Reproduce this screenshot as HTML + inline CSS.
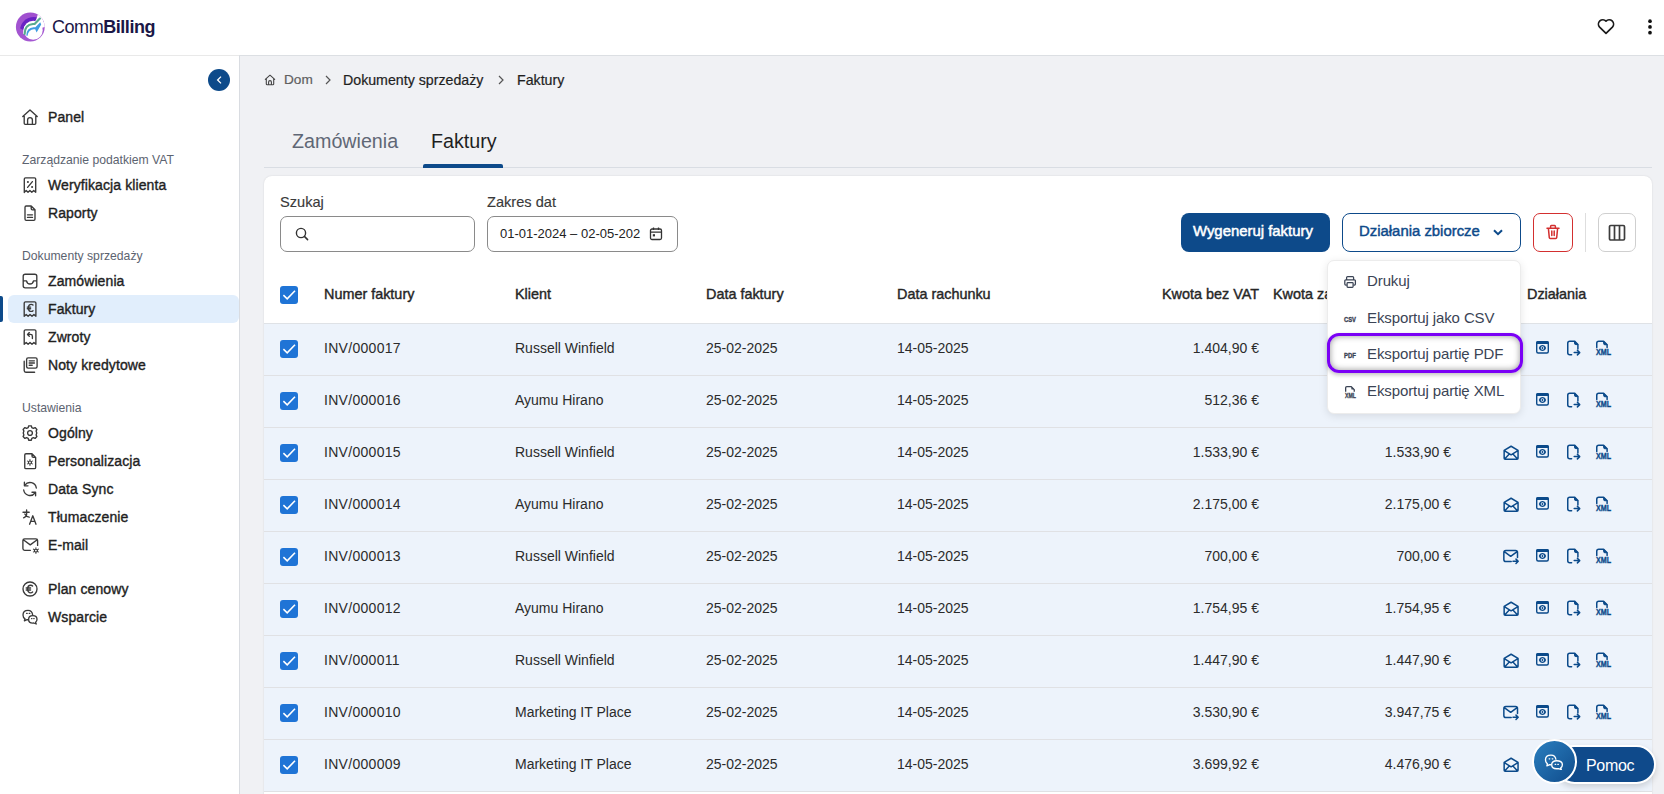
<!DOCTYPE html>
<html><head><meta charset="utf-8"><title>Faktury</title>
<style>
*{box-sizing:border-box;margin:0;padding:0}
html,body{width:1664px;height:794px;overflow:hidden}
body{background:#f0f1f4;font-family:"Liberation Sans",sans-serif;color:#1f1f1f;position:relative}
.abs{position:absolute}
#hdr{left:0;top:0;width:1664px;height:56px;background:#fff;border-bottom:1px solid #e9e9e9}
.logo{left:52px;top:16px;font-size:18px;line-height:22px;color:#1b1747;letter-spacing:-0.45px;white-space:nowrap}
.dot{left:1648.2px;width:3.6px;height:3.6px;border-radius:2px;background:#111}
#side{left:0;top:56px;width:240px;height:738px;background:#fff;border-right:1px solid #d9dce1}
.ntx{position:absolute;left:48px;line-height:28px;font-size:14px;font-weight:normal;-webkit-text-stroke:0.38px #1f1f1f;letter-spacing:0.1px;color:#1f1f1f;white-space:nowrap}
.sec{position:absolute;left:22px;font-size:12.2px;color:#5c6370;line-height:16px;white-space:nowrap}
.bc{font-size:14.2px;line-height:16px;position:absolute;top:72px;white-space:nowrap;-webkit-text-stroke:0.2px currentColor}
.tab{position:absolute;top:128px;font-size:19.7px;line-height:26px;white-space:nowrap}
#card{left:264px;top:176px;width:1388px;height:640px;background:#fff;border-radius:8px;box-shadow:0 0 2px rgba(0,0,0,0.12)}
.lbl{position:absolute;font-size:14.6px;color:#3a3a3a;line-height:16px;-webkit-text-stroke:0.15px #3a3a3a}
.inp{position:absolute;border:1px solid #8a8a8a;border-radius:7px;background:#fff}
.row{position:absolute;left:264px;width:1388px;height:52px;background:#edf3fb;border-bottom:1px solid #e0e1e4}
.cb{position:absolute;width:18px;height:18px;background:#1f74d6;border-radius:3px}
.cb svg{display:block}
.cell{position:absolute;font-size:14px;line-height:18px;color:#2b2b2b;white-space:nowrap}
.th{position:absolute;font-size:14.4px;line-height:18px;font-weight:normal;color:#262626;-webkit-text-stroke:0.4px #262626;white-space:nowrap}
.btnp{left:1181px;top:213px;width:149px;height:39px;background:#0d4a8a;border-radius:8px;color:#fff;font-size:14.9px;-webkit-text-stroke:0.5px #fff;line-height:37px;padding-left:12px;white-space:nowrap}
.btno{left:1342px;top:213px;width:179px;height:39px;border:1px solid #0d4a8a;border-radius:8px;color:#0d4a8a;font-size:14.9px;-webkit-text-stroke:0.45px #0d4a8a;line-height:35px;padding-left:16px;background:#fff;white-space:nowrap}
.menu{left:1327px;top:260px;width:194px;height:154px;background:#fff;border-radius:7px;border:1px solid #ececec;box-shadow:0 2px 8px rgba(0,0,0,0.1)}
.mtx{position:absolute;left:1367px;font-size:15px;line-height:18px;color:#3b4455;white-space:nowrap;letter-spacing:-0.1px}
.focus{left:1327px;top:333px;width:196px;height:40px;border:3px solid #7a00f5;border-radius:12px;box-shadow:0 2px 4px rgba(0,0,0,0.25), inset 0 0 6px rgba(0,0,0,0.42)}
.pill{left:1555px;top:745px;width:101px;height:39px;background:#0f4a8b;border:2px solid #fff;border-radius:20px;box-shadow:0 3px 6px rgba(0,0,0,0.15)}
.pill span{position:absolute;left:29px;top:1px;line-height:36px;font-size:16px;color:#fff;letter-spacing:-0.3px}
.pcirc{left:1532px;top:739px;width:45px;height:45px;border-radius:23px;border:2px solid #fff;background:linear-gradient(135deg,#2a7fbf,#104c8c)}

</style></head>
<body>
<div id="hdr" class="abs">
  <svg class="abs" style="left:14px;top:11px" width="34" height="34" viewBox="0 0 34 34">
    <defs><clipPath id="cpo"><circle cx="16.3" cy="16" r="14.4"/></clipPath><clipPath id="cpv"><circle cx="19.8" cy="19.8" r="13.9"/></clipPath>
    <linearGradient id="lgp" x1="0" y1="0" x2="0" y2="1"><stop offset="0" stop-color="#a04fcf"/><stop offset="1" stop-color="#a559d2"/></linearGradient></defs>
    <g clip-path="url(#cpo)">
      <rect x="0" y="0" width="34" height="34" fill="url(#lgp)"/>
      <path d="M0 0 H34 V12 L20 12.5 L11 20 L0 14 Z" fill="#6a22c4" clip-path="url(#cpv)"/>
      <circle cx="19.2" cy="19.3" r="9.5" fill="#fff"/>
      <path d="M18.8 19 L25.6 -2 L38 -2 L38 14.4 Z" fill="#fff"/>
    </g>
    <path d="M10.6 23 Q10.6 13.6 19 13 L20.6 13 L25.9 7.6" fill="none" stroke="#fff" stroke-width="3.4" stroke-linejoin="round"/>
    <path d="M10.6 23 Q10.6 13.6 19 13 L20.6 13 L25.9 7.6" fill="none" stroke="#5aab8e" stroke-width="2.2" stroke-linejoin="round" stroke-linecap="round"/>
    <path d="M12.3 24.5 Q12.5 16.6 19.6 16.3 L21.4 16.3 L26.2 11.2 L27.2 13.4 L22.6 21.6 L21.2 18.3 Q14.8 17.4 13.4 25 Z" fill="#3f9de2"/>
  </svg>
  <div class="abs logo">Comm<b>Billing</b></div>
  <svg class="abs" style="left:1596px;top:17px" width="20" height="19" viewBox="0 0 20 19"><path d="M10 16.4 L3.6 10.1 A3.9 3.9 0 0 1 10 4.2 A3.9 3.9 0 0 1 16.4 10.1 Z" fill="none" stroke="#1a1a1a" stroke-width="1.7" stroke-linejoin="round"/></svg>
  <svg class="abs" style="left:1640px;top:15px" width="20" height="24" viewBox="0 0 20 24"><circle cx="10" cy="6.2" r="1.85" fill="#111"/><circle cx="10" cy="11.9" r="1.85" fill="#111"/><circle cx="10" cy="17.7" r="1.85" fill="#111"/></svg>
</div>
<div id="side" class="abs"></div>
<div class="abs" style="left:239px;top:55px;width:1425px;height:1px;background:#dcdfe3"></div>
<div class="abs" style="left:208px;top:69px;width:22px;height:22px;border-radius:11px;background:#0d4a8a">
<svg width="22" height="22" viewBox="0 0 22 22"><path d="M13 7.6 L9.6 11 L13 14.4" fill="none" stroke="#fff" stroke-width="1.3"/></svg></div>
<div class="abs" style="left:8px;top:295px;width:231px;height:28px;background:#e1eefc;border-radius:6px"></div>
<div class="abs" style="left:0;top:296px;width:3px;height:26px;background:#0d4a8a;border-radius:0 2px 2px 0"></div>
<svg class="abs" style="left:22px;top:109px" width="18" height="18" viewBox="0 0 18 18"><path fill="none" stroke="#3a3a3a" stroke-width="1.35" stroke-linecap="round" stroke-linejoin="round" d="M0.8 7.6 L8 0.9 L15.2 7.6 M2.2 6.3 V14.2 Q2.2 15.3 3.3 15.3 H12.7 Q13.8 15.3 13.8 14.2 V6.3 M5.6 15.2 V11 A2.4 2.4 0 0 1 10.4 11 V15.2"/></svg>
<div class="ntx" style="top:103px">Panel</div>
<div class="sec" style="top:152px">Zarządzanie podatkiem VAT</div>
<svg class="abs" style="left:22px;top:177px" width="18" height="18" viewBox="0 0 18 18"><path fill="none" stroke="#3a3a3a" stroke-width="1.35" stroke-linecap="round" stroke-linejoin="round" d="M2.3 15.5 V2 Q2.3 0.8 3.5 0.8 H12.5 Q13.7 0.8 13.7 2 V15.2 L11.7 13.5 L9.8 15.2 L7.9 13.5 L6 15.2 L4.2 13.5 L2.3 15.2 Z"/><path fill="none" stroke="#3a3a3a" stroke-width="1.35" stroke-linecap="round" stroke-linejoin="round" d="M5.6 10.4 L10.4 4.6"/><circle cx="5.9" cy="5" r="1.05" fill="#3a3a3a"/><circle cx="10.1" cy="10" r="1.05" fill="#3a3a3a"/></svg>
<div class="ntx" style="top:171px">Weryfikacja klienta</div>
<svg class="abs" style="left:22px;top:205px" width="18" height="18" viewBox="0 0 18 18"><path fill="none" stroke="#3a3a3a" stroke-width="1.35" stroke-linecap="round" stroke-linejoin="round" d="M3 2.2 Q3 1 4.2 1 H9.2 L13 4.8 V14 Q13 15.3 11.8 15.3 H4.2 Q3 15.3 3 14 Z M9.2 1 V3.6 Q9.2 4.8 10.4 4.8 H13"/><path fill="none" stroke="#3a3a3a" stroke-width="1.35" stroke-linecap="round" stroke-linejoin="round" d="M5.5 9.8 H10.5 M5.5 12.4 H10.5"/></svg>
<div class="ntx" style="top:199px">Raporty</div>
<div class="sec" style="top:248px">Dokumenty sprzedaży</div>
<svg class="abs" style="left:22px;top:273px" width="18" height="18" viewBox="0 0 18 18"><path fill="none" stroke="#3a3a3a" stroke-width="1.35" stroke-linecap="round" stroke-linejoin="round" d="M1.2 3.2 Q1.2 1.2 3.2 1.2 H12.8 Q14.8 1.2 14.8 3.2 V12.8 Q14.8 14.8 12.8 14.8 H3.2 Q1.2 14.8 1.2 12.8 Z M1.2 7.8 H4.5 Q5.2 11 8 11 Q10.8 11 11.5 7.8 H14.8"/></svg>
<div class="ntx" style="top:267px">Zamówienia</div>
<svg class="abs" style="left:22px;top:301px" width="18" height="18" viewBox="0 0 18 18"><path fill="none" stroke="#3a3a3a" stroke-width="1.35" stroke-linecap="round" stroke-linejoin="round" d="M2.2 15.2 V2.1 Q2.2 0.8 3.5 0.8 H12.6 Q13.9 0.8 13.9 2.1 V15.2 L11.9 13.5 L10 15.2 L8 13.5 L6.1 15.2 L4.2 13.5 Z"/><path fill="none" stroke="#3a3a3a" stroke-width="1.35" stroke-linecap="round" stroke-linejoin="round" d="M11 4.1 Q10.3 3.4 9.3 3.4 Q6.4 3.4 6.4 6.9 Q6.4 10.4 9.3 10.4 Q10.3 10.4 11 9.7 M5.3 6.1 H8.6 M5.3 7.7 H8.6"/></svg>
<div class="ntx" style="top:295px">Faktury</div>
<svg class="abs" style="left:22px;top:329px" width="18" height="18" viewBox="0 0 18 18"><path fill="none" stroke="#3a3a3a" stroke-width="1.35" stroke-linecap="round" stroke-linejoin="round" d="M2.2 15.2 V2.1 Q2.2 0.8 3.5 0.8 H12.6 Q13.9 0.8 13.9 2.1 V15.2 L11.9 13.5 L10 15.2 L8 13.5 L6.1 15.2 L4.2 13.5 Z"/><path fill="none" stroke="#3a3a3a" stroke-width="1.35" stroke-linecap="round" stroke-linejoin="round" d="M7.3 3.6 L5.5 5.4 L7.3 7.2 M5.5 5.4 H8.6 Q10.4 5.4 10.4 7.2 V9.6"/></svg>
<div class="ntx" style="top:323px">Zwroty</div>
<svg class="abs" style="left:22px;top:357px" width="18" height="18" viewBox="0 0 18 18"><path fill="none" stroke="#3a3a3a" stroke-width="1.35" stroke-linecap="round" stroke-linejoin="round" d="M4.6 2.4 Q4.6 0.9 6.1 0.9 H13.6 Q15.1 0.9 15.1 2.4 V9.6 Q15.1 11.1 13.6 11.1 H6.1 Q4.6 11.1 4.6 9.6 Z"/><path fill="none" stroke="#3a3a3a" stroke-width="1.35" stroke-linecap="round" stroke-linejoin="round" d="M2.2 4.2 V13.6 Q2.2 15.2 3.8 15.2 H12.6"/><path fill="none" stroke="#3a3a3a" stroke-width="1.35" stroke-linecap="round" stroke-linejoin="round" d="M7.2 3.8 H12.4 M7.2 6 H12.4 M7.2 8.2 H10.2"/></svg>
<div class="ntx" style="top:351px">Noty kredytowe</div>
<div class="sec" style="top:400px">Ustawienia</div>
<svg class="abs" style="left:22px;top:425px" width="18" height="18" viewBox="0 0 18 18"><g transform="translate(8 8)"><path fill="none" stroke="#3a3a3a" stroke-width="1.35" stroke-linejoin="round" d="M-1.3 -7.2 L1.3 -7.2 L1.8 -5.4 L3.4 -4.6 L5.1 -5.4 L6.9 -3.6 L6.1 -1.9 L6.7 -0.3 L6.7 0.3 L6.1 1.9 L6.9 3.6 L5.1 5.4 L3.4 4.6 L1.8 5.4 L1.3 7.2 L-1.3 7.2 L-1.8 5.4 L-3.4 4.6 L-5.1 5.4 L-6.9 3.6 L-6.1 1.9 L-6.7 0.3 L-6.7 -0.3 L-6.1 -1.9 L-6.9 -3.6 L-5.1 -5.4 L-3.4 -4.6 L-1.8 -5.4 Z"/><circle r="2.4" fill="none" stroke="#3a3a3a" stroke-width="1.35"/></g></svg>
<div class="ntx" style="top:419px">Ogólny</div>
<svg class="abs" style="left:22px;top:453px" width="18" height="18" viewBox="0 0 18 18"><path fill="none" stroke="#3a3a3a" stroke-width="1.35" stroke-linecap="round" stroke-linejoin="round" d="M2.75 2 Q2.75 0.75 4 0.75 H10 L13.65 4.4 V14.4 Q13.65 15.6 12.4 15.6 H4 Q2.75 15.6 2.75 14.4 Z M10 0.75 V3 Q10 4.4 11.4 4.4 H13.65"/><path d="M8.69 6.28 L7.21 6.28 L7.70 7.31 L6.18 8.19 L5.54 7.25 L4.79 8.54 L5.93 8.62 L5.93 10.38 L4.79 10.46 L5.54 11.75 L6.18 10.81 L7.70 11.69 L7.21 12.72 L8.69 12.72 L8.20 11.69 L9.72 10.81 L10.36 11.75 L11.11 10.46 L9.97 10.38 L9.97 8.62 L11.11 8.54 L10.36 7.25 L9.72 8.19 L8.20 7.31Z" fill="#3a3a3a"/><circle cx="7.95" cy="9.5" r="0.9" fill="#fff"/></svg>
<div class="ntx" style="top:447px">Personalizacja</div>
<svg class="abs" style="left:22px;top:481px" width="18" height="18" viewBox="0 0 18 18"><path fill="none" stroke="#3a3a3a" stroke-width="1.35" stroke-linecap="round" stroke-linejoin="round" d="M14.3 7 A6.3 6.3 0 0 0 2.9 4.2 M1.7 9 A6.3 6.3 0 0 0 13.1 11.8"/><path fill="none" stroke="#3a3a3a" stroke-width="1.35" stroke-linecap="round" stroke-linejoin="round" d="M2.4 1.2 V4.8 H6 M13.6 14.8 V11.2 H10"/></svg>
<div class="ntx" style="top:475px">Data Sync</div>
<svg class="abs" style="left:22px;top:509px" width="18" height="18" viewBox="0 0 18 18"><path fill="none" stroke="#3a3a3a" stroke-width="1.35" stroke-linecap="round" stroke-linejoin="round" d="M1 3.2 H7.2 M4.6 1 V5.5 Q4.4 7.8 1.6 8.8 M2.8 5 Q4.2 7.8 7.2 8.2"/><path fill="none" stroke="#3a3a3a" stroke-width="1.35" stroke-linecap="round" stroke-linejoin="round" d="M7.6 15.2 L10.8 6.8 L14 15.2 M8.8 12.3 H12.8"/></svg>
<div class="ntx" style="top:503px">Tłumaczenie</div>
<svg class="abs" style="left:22px;top:537px" width="18" height="18" viewBox="0 0 18 18"><path fill="none" stroke="#3a3a3a" stroke-width="1.35" stroke-linecap="round" stroke-linejoin="round" d="M8.4 13.3 H2.6 Q0.9 13.3 0.9 11.6 V3.5 Q0.9 1.9 2.6 1.9 H13.9 Q15.6 1.9 15.6 3.5 V8.4 M1.3 2.7 L8.25 7.9 L15.2 2.7"/><path d="M14.64 10.38 L13.16 10.38 L13.65 11.41 L12.13 12.29 L11.49 11.35 L10.74 12.64 L11.88 12.72 L11.88 14.48 L10.74 14.56 L11.49 15.85 L12.13 14.91 L13.65 15.79 L13.16 16.82 L14.64 16.82 L14.15 15.79 L15.67 14.91 L16.31 15.85 L17.06 14.56 L15.92 14.48 L15.92 12.72 L17.06 12.64 L16.31 11.35 L15.67 12.29 L14.15 11.41Z" fill="#3a3a3a"/><circle cx="13.9" cy="13.6" r="0.9" fill="#fff"/></svg>
<div class="ntx" style="top:531px">E-mail</div>
<svg class="abs" style="left:22px;top:581px" width="18" height="18" viewBox="0 0 18 18"><circle cx="8" cy="8" r="7" fill="none" stroke="#3a3a3a" stroke-width="1.35" stroke-linecap="round" stroke-linejoin="round"/><path fill="none" stroke="#3a3a3a" stroke-width="1.35" stroke-linecap="round" stroke-linejoin="round" d="M10.6 5 Q9.8 4.2 8.8 4.2 Q5.6 4.2 5.6 8 Q5.6 11.8 8.8 11.8 Q9.8 11.8 10.6 11 M4.2 7 H8.6 M4.2 9 H8.6"/></svg>
<div class="ntx" style="top:575px">Plan cenowy</div>
<svg class="abs" style="left:22px;top:609px" width="18" height="18" viewBox="0 0 18 18"><path fill="none" stroke="#3a3a3a" stroke-width="1.35" stroke-linecap="round" stroke-linejoin="round" d="M10.6 5.6 Q10 1.4 6 1.4 Q1 1.4 1 6 Q1 8.6 3 9.8 L2.4 11.8 L5 10.6 Q5.6 10.7 6.2 10.7"/><path fill="none" stroke="#3a3a3a" stroke-width="1.35" stroke-linecap="round" stroke-linejoin="round" d="M10.8 6.6 Q15 6.6 15 10.2 Q15 12.2 13.6 13.2 L14.2 15 L11.8 14 Q11.3 14.1 10.8 14.1 Q6.6 14.1 6.6 10.4 Q6.6 6.6 10.8 6.6Z"/><path d="M4.6 4.4 H5.2 M7.2 4.4 H7.8 M9.5 9.6 H10 M11.7 9.6 H12.2" stroke="#3a3a3a" stroke-width="1.2" stroke-linecap="round"/></svg>
<div class="ntx" style="top:603px">Wsparcie</div>
<svg class="abs" style="left:264px;top:74px" width="12" height="12" viewBox="0 0 12 12"><path d="M1 5.6 L6 1.2 L11 5.6 M2.3 4.6 V10 Q2.3 10.8 3.1 10.8 H8.9 Q9.7 10.8 9.7 10 V4.6 M4.6 10.8 V8 A1.4 1.4 0 0 1 7.4 8 V10.8" fill="none" stroke="#444" stroke-width="1.1" stroke-linejoin="round"/></svg>
<div class="bc" style="left:284px;color:#606060;font-size:13.6px">Dom</div>
<svg class="abs" style="left:324px;top:74px" width="8" height="12" viewBox="0 0 8 12"><path d="M2 2 L6 6 L2 10" fill="none" stroke="#555" stroke-width="1.2"/></svg>
<div class="bc" style="left:343px">Dokumenty sprzedaży</div>
<svg class="abs" style="left:497px;top:74px" width="8" height="12" viewBox="0 0 8 12"><path d="M2 2 L6 6 L2 10" fill="none" stroke="#555" stroke-width="1.2"/></svg>
<div class="bc" style="left:517px">Faktury</div>
<div class="tab" style="left:292px;color:#5f6775">Zamówienia</div>
<div class="tab" style="left:431px;color:#1f1f1f">Faktury</div>
<div class="abs" style="left:264px;top:167px;width:1388px;height:1px;background:#d9dde3"></div>
<div class="abs" style="left:423px;top:164px;width:80px;height:4px;background:#0d4a8a;border-radius:2px 2px 0 0"></div>

<div id="card" class="abs"></div>
<div class="lbl" style="left:280px;top:194px">Szukaj</div>
<div class="lbl" style="left:487px;top:194px">Zakres dat</div>
<div class="inp" style="left:280px;top:216px;width:195px;height:36px"></div>
<svg class="abs" style="left:294px;top:226px" width="16" height="16" viewBox="0 0 16 16"><circle cx="7" cy="7" r="4.6" fill="none" stroke="#333" stroke-width="1.4"/><path d="M10.4 10.4 L13.6 13.6" stroke="#333" stroke-width="1.5" stroke-linecap="round"/></svg>
<div class="inp" style="left:487px;top:216px;width:191px;height:36px"></div>
<div class="abs" style="left:500px;top:226px;font-size:13px;line-height:16px;color:#222;letter-spacing:0px">01-01-2024 – 02-05-202</div>
<svg class="abs" style="left:648px;top:226px" width="16" height="16" viewBox="0 0 16 16"><rect x="2.5" y="3" width="11" height="10.5" rx="1.5" fill="none" stroke="#333" stroke-width="1.3"/><path d="M2.5 6.2 H13.5 M5.5 1.5 V4 M10.5 1.5 V4" stroke="#333" stroke-width="1.3"/><rect x="4.8" y="8.2" width="2.2" height="2.2" fill="#333"/></svg>
<div class="abs btnp">Wygeneruj faktury</div>
<div class="abs btno">Działania zbiorcze</div>
<svg class="abs" style="left:1491px;top:225px" width="14" height="14" viewBox="0 0 14 14"><path d="M3 5.2 L7 9.2 L11 5.2" fill="none" stroke="#0d4a8a" stroke-width="2"/></svg>
<div class="abs" style="left:1533px;top:213px;width:40px;height:39px;border:1px solid #d32f2f;border-radius:7px;background:#fff"></div>
<svg class="abs" style="left:1544px;top:223px" width="18" height="18" viewBox="0 0 18 18"><path d="M3 5.2 H15 M6.6 5 V3.4 Q6.6 2.6 7.4 2.6 H10.6 Q11.4 2.6 11.4 3.4 V5 M4.4 5.4 L5.3 14.6 Q5.4 15.4 6.2 15.4 H11.8 Q12.6 15.4 12.7 14.6 L13.6 5.4 M7.8 8 V12.6 M10.2 8 V12.6" fill="none" stroke="#d32f2f" stroke-width="1.5" stroke-linecap="round" stroke-linejoin="round"/></svg>
<div class="abs" style="left:1585px;top:213px;width:1px;height:39px;background:#dedede"></div>
<div class="abs" style="left:1598px;top:213px;width:38px;height:39px;border:1px solid #cfcfcf;border-radius:7px;background:#fff"></div>
<svg class="abs" style="left:1607px;top:223px" width="20" height="19" viewBox="0 0 20 19"><rect x="2.5" y="2.5" width="15" height="14.5" rx="1.2" fill="none" stroke="#3c3c3c" stroke-width="1.7"/><path d="M7.5 2.5 V17 M12.5 2.5 V17" stroke="#3c3c3c" stroke-width="1.7"/></svg>
<div class="abs" style="left:264px;top:323px;width:1388px;height:1px;background:#dfe2e6"></div>
<div class="cb" style="left:280px;top:286px"><svg width="18" height="18" viewBox="0 0 18 18"><path d="M3.4 9.2 L7.2 12.8 L15 4.8" fill="none" stroke="#fff" stroke-width="1.6"/></svg></div>
<div class="th" style="left:324px;top:285px">Numer faktury</div>
<div class="th" style="left:515px;top:285px">Klient</div>
<div class="th" style="left:706px;top:285px">Data faktury</div>
<div class="th" style="left:897px;top:285px">Data rachunku</div>
<div class="th" style="right:405px;top:285px">Kwota bez VAT</div>
<div class="th" style="left:1273px;top:285px">Kwota zapłacona</div>
<div class="th" style="left:1527px;top:285px">Działania</div>
<div class="row" style="top:324px"></div>
<div class="cb" style="left:280px;top:340px"><svg width="18" height="18" viewBox="0 0 18 18"><path d="M3.4 9.2 L7.2 12.8 L15 4.8" fill="none" stroke="#fff" stroke-width="1.6"/></svg></div>
<div class="cell" style="left:324px;top:339px;letter-spacing:0.3px">INV/000017</div>
<div class="cell" style="left:515px;top:339px">Russell Winfield</div>
<div class="cell" style="left:706px;top:339px">25-02-2025</div>
<div class="cell" style="left:897px;top:339px">14-05-2025</div>
<div class="cell" style="right:405px;top:339px">1.404,90 €</div>
<div class="cell" style="right:213px;top:339px">1.404,90 €</div>
<svg class="abs" style="left:1502px;top:339px" width="18" height="18" viewBox="0 0 18 18"><path fill="none" stroke="#0b4a8a" stroke-width="1.5" stroke-linecap="round" stroke-linejoin="round" d="M2.15 7.4 L9.1 3.25 L16.05 7.4 V15.25 Q16.05 16.25 15.05 16.25 H3.15 Q2.15 16.25 2.15 15.25 Z M2.3 7.7 L9.1 11.8 L15.9 7.7 M2.6 15.9 L7.3 11 M15.6 15.9 L10.9 11"/></svg>
<svg class="abs" style="left:1535px;top:339px" width="18" height="18" viewBox="0 0 18 18"><rect x="1.7" y="2.7" width="11.6" height="11.35" rx="1.5" fill="none" stroke="#0b4a8a" stroke-width="1.4"/><path d="M1 4 Q1 2 3 2 H12 Q14 2 14 4 V4.9 H1Z" fill="#0b4a8a"/><path d="M3.8 8.95 C4.8 5 10.1 5 11.1 8.95 C10.1 12.9 4.8 12.9 3.8 8.95Z" fill="#0b4a8a"/><circle cx="7.45" cy="8.95" r="1.75" fill="#edf3fb"/><circle cx="7.45" cy="8.95" r="0.95" fill="#0b4a8a"/></svg>
<svg class="abs" style="left:1566px;top:339px" width="18" height="18" viewBox="0 0 18 18"><path fill="none" stroke="#0b4a8a" stroke-width="1.5" stroke-linecap="round" stroke-linejoin="round" d="M11.9 10 V5.6 L8.5 2.15 H3.75 Q1.75 2.15 1.75 4.15 V13.85 Q1.75 15.85 3.75 15.85 H5.6"/><path d="M8.5 2.15 L11.9 5.6 H9.8 Q8.5 5.6 8.5 4.3Z" fill="#0b4a8a" stroke="#0b4a8a" stroke-width="1" stroke-linejoin="round"/><path fill="none" stroke="#0b4a8a" stroke-width="1.5" stroke-linecap="round" stroke-linejoin="round" d="M8.2 13.6 H13.6 M11.4 11.3 L13.7 13.6 L11.4 15.9"/></svg>
<svg class="abs" style="left:1595px;top:339px" width="18" height="18" viewBox="0 0 18 18"><path fill="none" stroke="#0b4a8a" stroke-width="1.5" stroke-linecap="round" stroke-linejoin="round" d="M1.75 8.6 V4.25 Q1.75 2.25 3.75 2.25 H8.6 L12.1 5.75 V8.6"/><path d="M8.6 2.25 L12.1 5.75 H9.9 Q8.6 5.75 8.6 4.45Z" fill="#0b4a8a" stroke="#0b4a8a" stroke-width="1" stroke-linejoin="round"/><text x="1" y="16" font-family="Liberation Sans" font-weight="bold" font-size="8.4" fill="#0b4a8a" stroke="#0b4a8a" stroke-width="0.35" textLength="15" lengthAdjust="spacingAndGlyphs">XML</text></svg>
<div class="row" style="top:376px"></div>
<div class="cb" style="left:280px;top:392px"><svg width="18" height="18" viewBox="0 0 18 18"><path d="M3.4 9.2 L7.2 12.8 L15 4.8" fill="none" stroke="#fff" stroke-width="1.6"/></svg></div>
<div class="cell" style="left:324px;top:391px;letter-spacing:0.3px">INV/000016</div>
<div class="cell" style="left:515px;top:391px">Ayumu Hirano</div>
<div class="cell" style="left:706px;top:391px">25-02-2025</div>
<div class="cell" style="left:897px;top:391px">14-05-2025</div>
<div class="cell" style="right:405px;top:391px">512,36 €</div>
<div class="cell" style="right:213px;top:391px">512,36 €</div>
<svg class="abs" style="left:1502px;top:391px" width="18" height="18" viewBox="0 0 18 18"><path fill="none" stroke="#0b4a8a" stroke-width="1.5" stroke-linecap="round" stroke-linejoin="round" d="M2.15 7.4 L9.1 3.25 L16.05 7.4 V15.25 Q16.05 16.25 15.05 16.25 H3.15 Q2.15 16.25 2.15 15.25 Z M2.3 7.7 L9.1 11.8 L15.9 7.7 M2.6 15.9 L7.3 11 M15.6 15.9 L10.9 11"/></svg>
<svg class="abs" style="left:1535px;top:391px" width="18" height="18" viewBox="0 0 18 18"><rect x="1.7" y="2.7" width="11.6" height="11.35" rx="1.5" fill="none" stroke="#0b4a8a" stroke-width="1.4"/><path d="M1 4 Q1 2 3 2 H12 Q14 2 14 4 V4.9 H1Z" fill="#0b4a8a"/><path d="M3.8 8.95 C4.8 5 10.1 5 11.1 8.95 C10.1 12.9 4.8 12.9 3.8 8.95Z" fill="#0b4a8a"/><circle cx="7.45" cy="8.95" r="1.75" fill="#edf3fb"/><circle cx="7.45" cy="8.95" r="0.95" fill="#0b4a8a"/></svg>
<svg class="abs" style="left:1566px;top:391px" width="18" height="18" viewBox="0 0 18 18"><path fill="none" stroke="#0b4a8a" stroke-width="1.5" stroke-linecap="round" stroke-linejoin="round" d="M11.9 10 V5.6 L8.5 2.15 H3.75 Q1.75 2.15 1.75 4.15 V13.85 Q1.75 15.85 3.75 15.85 H5.6"/><path d="M8.5 2.15 L11.9 5.6 H9.8 Q8.5 5.6 8.5 4.3Z" fill="#0b4a8a" stroke="#0b4a8a" stroke-width="1" stroke-linejoin="round"/><path fill="none" stroke="#0b4a8a" stroke-width="1.5" stroke-linecap="round" stroke-linejoin="round" d="M8.2 13.6 H13.6 M11.4 11.3 L13.7 13.6 L11.4 15.9"/></svg>
<svg class="abs" style="left:1595px;top:391px" width="18" height="18" viewBox="0 0 18 18"><path fill="none" stroke="#0b4a8a" stroke-width="1.5" stroke-linecap="round" stroke-linejoin="round" d="M1.75 8.6 V4.25 Q1.75 2.25 3.75 2.25 H8.6 L12.1 5.75 V8.6"/><path d="M8.6 2.25 L12.1 5.75 H9.9 Q8.6 5.75 8.6 4.45Z" fill="#0b4a8a" stroke="#0b4a8a" stroke-width="1" stroke-linejoin="round"/><text x="1" y="16" font-family="Liberation Sans" font-weight="bold" font-size="8.4" fill="#0b4a8a" stroke="#0b4a8a" stroke-width="0.35" textLength="15" lengthAdjust="spacingAndGlyphs">XML</text></svg>
<div class="row" style="top:428px"></div>
<div class="cb" style="left:280px;top:444px"><svg width="18" height="18" viewBox="0 0 18 18"><path d="M3.4 9.2 L7.2 12.8 L15 4.8" fill="none" stroke="#fff" stroke-width="1.6"/></svg></div>
<div class="cell" style="left:324px;top:443px;letter-spacing:0.3px">INV/000015</div>
<div class="cell" style="left:515px;top:443px">Russell Winfield</div>
<div class="cell" style="left:706px;top:443px">25-02-2025</div>
<div class="cell" style="left:897px;top:443px">14-05-2025</div>
<div class="cell" style="right:405px;top:443px">1.533,90 €</div>
<div class="cell" style="right:213px;top:443px">1.533,90 €</div>
<svg class="abs" style="left:1502px;top:443px" width="18" height="18" viewBox="0 0 18 18"><path fill="none" stroke="#0b4a8a" stroke-width="1.5" stroke-linecap="round" stroke-linejoin="round" d="M2.15 7.4 L9.1 3.25 L16.05 7.4 V15.25 Q16.05 16.25 15.05 16.25 H3.15 Q2.15 16.25 2.15 15.25 Z M2.3 7.7 L9.1 11.8 L15.9 7.7 M2.6 15.9 L7.3 11 M15.6 15.9 L10.9 11"/></svg>
<svg class="abs" style="left:1535px;top:443px" width="18" height="18" viewBox="0 0 18 18"><rect x="1.7" y="2.7" width="11.6" height="11.35" rx="1.5" fill="none" stroke="#0b4a8a" stroke-width="1.4"/><path d="M1 4 Q1 2 3 2 H12 Q14 2 14 4 V4.9 H1Z" fill="#0b4a8a"/><path d="M3.8 8.95 C4.8 5 10.1 5 11.1 8.95 C10.1 12.9 4.8 12.9 3.8 8.95Z" fill="#0b4a8a"/><circle cx="7.45" cy="8.95" r="1.75" fill="#edf3fb"/><circle cx="7.45" cy="8.95" r="0.95" fill="#0b4a8a"/></svg>
<svg class="abs" style="left:1566px;top:443px" width="18" height="18" viewBox="0 0 18 18"><path fill="none" stroke="#0b4a8a" stroke-width="1.5" stroke-linecap="round" stroke-linejoin="round" d="M11.9 10 V5.6 L8.5 2.15 H3.75 Q1.75 2.15 1.75 4.15 V13.85 Q1.75 15.85 3.75 15.85 H5.6"/><path d="M8.5 2.15 L11.9 5.6 H9.8 Q8.5 5.6 8.5 4.3Z" fill="#0b4a8a" stroke="#0b4a8a" stroke-width="1" stroke-linejoin="round"/><path fill="none" stroke="#0b4a8a" stroke-width="1.5" stroke-linecap="round" stroke-linejoin="round" d="M8.2 13.6 H13.6 M11.4 11.3 L13.7 13.6 L11.4 15.9"/></svg>
<svg class="abs" style="left:1595px;top:443px" width="18" height="18" viewBox="0 0 18 18"><path fill="none" stroke="#0b4a8a" stroke-width="1.5" stroke-linecap="round" stroke-linejoin="round" d="M1.75 8.6 V4.25 Q1.75 2.25 3.75 2.25 H8.6 L12.1 5.75 V8.6"/><path d="M8.6 2.25 L12.1 5.75 H9.9 Q8.6 5.75 8.6 4.45Z" fill="#0b4a8a" stroke="#0b4a8a" stroke-width="1" stroke-linejoin="round"/><text x="1" y="16" font-family="Liberation Sans" font-weight="bold" font-size="8.4" fill="#0b4a8a" stroke="#0b4a8a" stroke-width="0.35" textLength="15" lengthAdjust="spacingAndGlyphs">XML</text></svg>
<div class="row" style="top:480px"></div>
<div class="cb" style="left:280px;top:496px"><svg width="18" height="18" viewBox="0 0 18 18"><path d="M3.4 9.2 L7.2 12.8 L15 4.8" fill="none" stroke="#fff" stroke-width="1.6"/></svg></div>
<div class="cell" style="left:324px;top:495px;letter-spacing:0.3px">INV/000014</div>
<div class="cell" style="left:515px;top:495px">Ayumu Hirano</div>
<div class="cell" style="left:706px;top:495px">25-02-2025</div>
<div class="cell" style="left:897px;top:495px">14-05-2025</div>
<div class="cell" style="right:405px;top:495px">2.175,00 €</div>
<div class="cell" style="right:213px;top:495px">2.175,00 €</div>
<svg class="abs" style="left:1502px;top:495px" width="18" height="18" viewBox="0 0 18 18"><path fill="none" stroke="#0b4a8a" stroke-width="1.5" stroke-linecap="round" stroke-linejoin="round" d="M2.15 7.4 L9.1 3.25 L16.05 7.4 V15.25 Q16.05 16.25 15.05 16.25 H3.15 Q2.15 16.25 2.15 15.25 Z M2.3 7.7 L9.1 11.8 L15.9 7.7 M2.6 15.9 L7.3 11 M15.6 15.9 L10.9 11"/></svg>
<svg class="abs" style="left:1535px;top:495px" width="18" height="18" viewBox="0 0 18 18"><rect x="1.7" y="2.7" width="11.6" height="11.35" rx="1.5" fill="none" stroke="#0b4a8a" stroke-width="1.4"/><path d="M1 4 Q1 2 3 2 H12 Q14 2 14 4 V4.9 H1Z" fill="#0b4a8a"/><path d="M3.8 8.95 C4.8 5 10.1 5 11.1 8.95 C10.1 12.9 4.8 12.9 3.8 8.95Z" fill="#0b4a8a"/><circle cx="7.45" cy="8.95" r="1.75" fill="#edf3fb"/><circle cx="7.45" cy="8.95" r="0.95" fill="#0b4a8a"/></svg>
<svg class="abs" style="left:1566px;top:495px" width="18" height="18" viewBox="0 0 18 18"><path fill="none" stroke="#0b4a8a" stroke-width="1.5" stroke-linecap="round" stroke-linejoin="round" d="M11.9 10 V5.6 L8.5 2.15 H3.75 Q1.75 2.15 1.75 4.15 V13.85 Q1.75 15.85 3.75 15.85 H5.6"/><path d="M8.5 2.15 L11.9 5.6 H9.8 Q8.5 5.6 8.5 4.3Z" fill="#0b4a8a" stroke="#0b4a8a" stroke-width="1" stroke-linejoin="round"/><path fill="none" stroke="#0b4a8a" stroke-width="1.5" stroke-linecap="round" stroke-linejoin="round" d="M8.2 13.6 H13.6 M11.4 11.3 L13.7 13.6 L11.4 15.9"/></svg>
<svg class="abs" style="left:1595px;top:495px" width="18" height="18" viewBox="0 0 18 18"><path fill="none" stroke="#0b4a8a" stroke-width="1.5" stroke-linecap="round" stroke-linejoin="round" d="M1.75 8.6 V4.25 Q1.75 2.25 3.75 2.25 H8.6 L12.1 5.75 V8.6"/><path d="M8.6 2.25 L12.1 5.75 H9.9 Q8.6 5.75 8.6 4.45Z" fill="#0b4a8a" stroke="#0b4a8a" stroke-width="1" stroke-linejoin="round"/><text x="1" y="16" font-family="Liberation Sans" font-weight="bold" font-size="8.4" fill="#0b4a8a" stroke="#0b4a8a" stroke-width="0.35" textLength="15" lengthAdjust="spacingAndGlyphs">XML</text></svg>
<div class="row" style="top:532px"></div>
<div class="cb" style="left:280px;top:548px"><svg width="18" height="18" viewBox="0 0 18 18"><path d="M3.4 9.2 L7.2 12.8 L15 4.8" fill="none" stroke="#fff" stroke-width="1.6"/></svg></div>
<div class="cell" style="left:324px;top:547px;letter-spacing:0.3px">INV/000013</div>
<div class="cell" style="left:515px;top:547px">Russell Winfield</div>
<div class="cell" style="left:706px;top:547px">25-02-2025</div>
<div class="cell" style="left:897px;top:547px">14-05-2025</div>
<div class="cell" style="right:405px;top:547px">700,00 €</div>
<div class="cell" style="right:213px;top:547px">700,00 €</div>
<svg class="abs" style="left:1502px;top:547px" width="18" height="18" viewBox="0 0 18 18"><path fill="none" stroke="#0b4a8a" stroke-width="1.5" stroke-linecap="round" stroke-linejoin="round" d="M9.2 14.6 H3.85 Q1.85 14.6 1.85 12.6 V5.55 Q1.85 3.55 3.85 3.55 H13.5 Q15.5 3.55 15.5 5.55 V10.6 M2.3 4.6 L8.7 9.3 L15.1 4.6"/><path fill="none" stroke="#0b4a8a" stroke-width="1.5" stroke-linecap="round" stroke-linejoin="round" d="M11 14.3 H16.1 M14 12.1 L16.2 14.3 L14 16.5"/></svg>
<svg class="abs" style="left:1535px;top:547px" width="18" height="18" viewBox="0 0 18 18"><rect x="1.7" y="2.7" width="11.6" height="11.35" rx="1.5" fill="none" stroke="#0b4a8a" stroke-width="1.4"/><path d="M1 4 Q1 2 3 2 H12 Q14 2 14 4 V4.9 H1Z" fill="#0b4a8a"/><path d="M3.8 8.95 C4.8 5 10.1 5 11.1 8.95 C10.1 12.9 4.8 12.9 3.8 8.95Z" fill="#0b4a8a"/><circle cx="7.45" cy="8.95" r="1.75" fill="#edf3fb"/><circle cx="7.45" cy="8.95" r="0.95" fill="#0b4a8a"/></svg>
<svg class="abs" style="left:1566px;top:547px" width="18" height="18" viewBox="0 0 18 18"><path fill="none" stroke="#0b4a8a" stroke-width="1.5" stroke-linecap="round" stroke-linejoin="round" d="M11.9 10 V5.6 L8.5 2.15 H3.75 Q1.75 2.15 1.75 4.15 V13.85 Q1.75 15.85 3.75 15.85 H5.6"/><path d="M8.5 2.15 L11.9 5.6 H9.8 Q8.5 5.6 8.5 4.3Z" fill="#0b4a8a" stroke="#0b4a8a" stroke-width="1" stroke-linejoin="round"/><path fill="none" stroke="#0b4a8a" stroke-width="1.5" stroke-linecap="round" stroke-linejoin="round" d="M8.2 13.6 H13.6 M11.4 11.3 L13.7 13.6 L11.4 15.9"/></svg>
<svg class="abs" style="left:1595px;top:547px" width="18" height="18" viewBox="0 0 18 18"><path fill="none" stroke="#0b4a8a" stroke-width="1.5" stroke-linecap="round" stroke-linejoin="round" d="M1.75 8.6 V4.25 Q1.75 2.25 3.75 2.25 H8.6 L12.1 5.75 V8.6"/><path d="M8.6 2.25 L12.1 5.75 H9.9 Q8.6 5.75 8.6 4.45Z" fill="#0b4a8a" stroke="#0b4a8a" stroke-width="1" stroke-linejoin="round"/><text x="1" y="16" font-family="Liberation Sans" font-weight="bold" font-size="8.4" fill="#0b4a8a" stroke="#0b4a8a" stroke-width="0.35" textLength="15" lengthAdjust="spacingAndGlyphs">XML</text></svg>
<div class="row" style="top:584px"></div>
<div class="cb" style="left:280px;top:600px"><svg width="18" height="18" viewBox="0 0 18 18"><path d="M3.4 9.2 L7.2 12.8 L15 4.8" fill="none" stroke="#fff" stroke-width="1.6"/></svg></div>
<div class="cell" style="left:324px;top:599px;letter-spacing:0.3px">INV/000012</div>
<div class="cell" style="left:515px;top:599px">Ayumu Hirano</div>
<div class="cell" style="left:706px;top:599px">25-02-2025</div>
<div class="cell" style="left:897px;top:599px">14-05-2025</div>
<div class="cell" style="right:405px;top:599px">1.754,95 €</div>
<div class="cell" style="right:213px;top:599px">1.754,95 €</div>
<svg class="abs" style="left:1502px;top:599px" width="18" height="18" viewBox="0 0 18 18"><path fill="none" stroke="#0b4a8a" stroke-width="1.5" stroke-linecap="round" stroke-linejoin="round" d="M2.15 7.4 L9.1 3.25 L16.05 7.4 V15.25 Q16.05 16.25 15.05 16.25 H3.15 Q2.15 16.25 2.15 15.25 Z M2.3 7.7 L9.1 11.8 L15.9 7.7 M2.6 15.9 L7.3 11 M15.6 15.9 L10.9 11"/></svg>
<svg class="abs" style="left:1535px;top:599px" width="18" height="18" viewBox="0 0 18 18"><rect x="1.7" y="2.7" width="11.6" height="11.35" rx="1.5" fill="none" stroke="#0b4a8a" stroke-width="1.4"/><path d="M1 4 Q1 2 3 2 H12 Q14 2 14 4 V4.9 H1Z" fill="#0b4a8a"/><path d="M3.8 8.95 C4.8 5 10.1 5 11.1 8.95 C10.1 12.9 4.8 12.9 3.8 8.95Z" fill="#0b4a8a"/><circle cx="7.45" cy="8.95" r="1.75" fill="#edf3fb"/><circle cx="7.45" cy="8.95" r="0.95" fill="#0b4a8a"/></svg>
<svg class="abs" style="left:1566px;top:599px" width="18" height="18" viewBox="0 0 18 18"><path fill="none" stroke="#0b4a8a" stroke-width="1.5" stroke-linecap="round" stroke-linejoin="round" d="M11.9 10 V5.6 L8.5 2.15 H3.75 Q1.75 2.15 1.75 4.15 V13.85 Q1.75 15.85 3.75 15.85 H5.6"/><path d="M8.5 2.15 L11.9 5.6 H9.8 Q8.5 5.6 8.5 4.3Z" fill="#0b4a8a" stroke="#0b4a8a" stroke-width="1" stroke-linejoin="round"/><path fill="none" stroke="#0b4a8a" stroke-width="1.5" stroke-linecap="round" stroke-linejoin="round" d="M8.2 13.6 H13.6 M11.4 11.3 L13.7 13.6 L11.4 15.9"/></svg>
<svg class="abs" style="left:1595px;top:599px" width="18" height="18" viewBox="0 0 18 18"><path fill="none" stroke="#0b4a8a" stroke-width="1.5" stroke-linecap="round" stroke-linejoin="round" d="M1.75 8.6 V4.25 Q1.75 2.25 3.75 2.25 H8.6 L12.1 5.75 V8.6"/><path d="M8.6 2.25 L12.1 5.75 H9.9 Q8.6 5.75 8.6 4.45Z" fill="#0b4a8a" stroke="#0b4a8a" stroke-width="1" stroke-linejoin="round"/><text x="1" y="16" font-family="Liberation Sans" font-weight="bold" font-size="8.4" fill="#0b4a8a" stroke="#0b4a8a" stroke-width="0.35" textLength="15" lengthAdjust="spacingAndGlyphs">XML</text></svg>
<div class="row" style="top:636px"></div>
<div class="cb" style="left:280px;top:652px"><svg width="18" height="18" viewBox="0 0 18 18"><path d="M3.4 9.2 L7.2 12.8 L15 4.8" fill="none" stroke="#fff" stroke-width="1.6"/></svg></div>
<div class="cell" style="left:324px;top:651px;letter-spacing:0.3px">INV/000011</div>
<div class="cell" style="left:515px;top:651px">Russell Winfield</div>
<div class="cell" style="left:706px;top:651px">25-02-2025</div>
<div class="cell" style="left:897px;top:651px">14-05-2025</div>
<div class="cell" style="right:405px;top:651px">1.447,90 €</div>
<div class="cell" style="right:213px;top:651px">1.447,90 €</div>
<svg class="abs" style="left:1502px;top:651px" width="18" height="18" viewBox="0 0 18 18"><path fill="none" stroke="#0b4a8a" stroke-width="1.5" stroke-linecap="round" stroke-linejoin="round" d="M2.15 7.4 L9.1 3.25 L16.05 7.4 V15.25 Q16.05 16.25 15.05 16.25 H3.15 Q2.15 16.25 2.15 15.25 Z M2.3 7.7 L9.1 11.8 L15.9 7.7 M2.6 15.9 L7.3 11 M15.6 15.9 L10.9 11"/></svg>
<svg class="abs" style="left:1535px;top:651px" width="18" height="18" viewBox="0 0 18 18"><rect x="1.7" y="2.7" width="11.6" height="11.35" rx="1.5" fill="none" stroke="#0b4a8a" stroke-width="1.4"/><path d="M1 4 Q1 2 3 2 H12 Q14 2 14 4 V4.9 H1Z" fill="#0b4a8a"/><path d="M3.8 8.95 C4.8 5 10.1 5 11.1 8.95 C10.1 12.9 4.8 12.9 3.8 8.95Z" fill="#0b4a8a"/><circle cx="7.45" cy="8.95" r="1.75" fill="#edf3fb"/><circle cx="7.45" cy="8.95" r="0.95" fill="#0b4a8a"/></svg>
<svg class="abs" style="left:1566px;top:651px" width="18" height="18" viewBox="0 0 18 18"><path fill="none" stroke="#0b4a8a" stroke-width="1.5" stroke-linecap="round" stroke-linejoin="round" d="M11.9 10 V5.6 L8.5 2.15 H3.75 Q1.75 2.15 1.75 4.15 V13.85 Q1.75 15.85 3.75 15.85 H5.6"/><path d="M8.5 2.15 L11.9 5.6 H9.8 Q8.5 5.6 8.5 4.3Z" fill="#0b4a8a" stroke="#0b4a8a" stroke-width="1" stroke-linejoin="round"/><path fill="none" stroke="#0b4a8a" stroke-width="1.5" stroke-linecap="round" stroke-linejoin="round" d="M8.2 13.6 H13.6 M11.4 11.3 L13.7 13.6 L11.4 15.9"/></svg>
<svg class="abs" style="left:1595px;top:651px" width="18" height="18" viewBox="0 0 18 18"><path fill="none" stroke="#0b4a8a" stroke-width="1.5" stroke-linecap="round" stroke-linejoin="round" d="M1.75 8.6 V4.25 Q1.75 2.25 3.75 2.25 H8.6 L12.1 5.75 V8.6"/><path d="M8.6 2.25 L12.1 5.75 H9.9 Q8.6 5.75 8.6 4.45Z" fill="#0b4a8a" stroke="#0b4a8a" stroke-width="1" stroke-linejoin="round"/><text x="1" y="16" font-family="Liberation Sans" font-weight="bold" font-size="8.4" fill="#0b4a8a" stroke="#0b4a8a" stroke-width="0.35" textLength="15" lengthAdjust="spacingAndGlyphs">XML</text></svg>
<div class="row" style="top:688px"></div>
<div class="cb" style="left:280px;top:704px"><svg width="18" height="18" viewBox="0 0 18 18"><path d="M3.4 9.2 L7.2 12.8 L15 4.8" fill="none" stroke="#fff" stroke-width="1.6"/></svg></div>
<div class="cell" style="left:324px;top:703px;letter-spacing:0.3px">INV/000010</div>
<div class="cell" style="left:515px;top:703px">Marketing IT Place</div>
<div class="cell" style="left:706px;top:703px">25-02-2025</div>
<div class="cell" style="left:897px;top:703px">14-05-2025</div>
<div class="cell" style="right:405px;top:703px">3.530,90 €</div>
<div class="cell" style="right:213px;top:703px">3.947,75 €</div>
<svg class="abs" style="left:1502px;top:703px" width="18" height="18" viewBox="0 0 18 18"><path fill="none" stroke="#0b4a8a" stroke-width="1.5" stroke-linecap="round" stroke-linejoin="round" d="M9.2 14.6 H3.85 Q1.85 14.6 1.85 12.6 V5.55 Q1.85 3.55 3.85 3.55 H13.5 Q15.5 3.55 15.5 5.55 V10.6 M2.3 4.6 L8.7 9.3 L15.1 4.6"/><path fill="none" stroke="#0b4a8a" stroke-width="1.5" stroke-linecap="round" stroke-linejoin="round" d="M11 14.3 H16.1 M14 12.1 L16.2 14.3 L14 16.5"/></svg>
<svg class="abs" style="left:1535px;top:703px" width="18" height="18" viewBox="0 0 18 18"><rect x="1.7" y="2.7" width="11.6" height="11.35" rx="1.5" fill="none" stroke="#0b4a8a" stroke-width="1.4"/><path d="M1 4 Q1 2 3 2 H12 Q14 2 14 4 V4.9 H1Z" fill="#0b4a8a"/><path d="M3.8 8.95 C4.8 5 10.1 5 11.1 8.95 C10.1 12.9 4.8 12.9 3.8 8.95Z" fill="#0b4a8a"/><circle cx="7.45" cy="8.95" r="1.75" fill="#edf3fb"/><circle cx="7.45" cy="8.95" r="0.95" fill="#0b4a8a"/></svg>
<svg class="abs" style="left:1566px;top:703px" width="18" height="18" viewBox="0 0 18 18"><path fill="none" stroke="#0b4a8a" stroke-width="1.5" stroke-linecap="round" stroke-linejoin="round" d="M11.9 10 V5.6 L8.5 2.15 H3.75 Q1.75 2.15 1.75 4.15 V13.85 Q1.75 15.85 3.75 15.85 H5.6"/><path d="M8.5 2.15 L11.9 5.6 H9.8 Q8.5 5.6 8.5 4.3Z" fill="#0b4a8a" stroke="#0b4a8a" stroke-width="1" stroke-linejoin="round"/><path fill="none" stroke="#0b4a8a" stroke-width="1.5" stroke-linecap="round" stroke-linejoin="round" d="M8.2 13.6 H13.6 M11.4 11.3 L13.7 13.6 L11.4 15.9"/></svg>
<svg class="abs" style="left:1595px;top:703px" width="18" height="18" viewBox="0 0 18 18"><path fill="none" stroke="#0b4a8a" stroke-width="1.5" stroke-linecap="round" stroke-linejoin="round" d="M1.75 8.6 V4.25 Q1.75 2.25 3.75 2.25 H8.6 L12.1 5.75 V8.6"/><path d="M8.6 2.25 L12.1 5.75 H9.9 Q8.6 5.75 8.6 4.45Z" fill="#0b4a8a" stroke="#0b4a8a" stroke-width="1" stroke-linejoin="round"/><text x="1" y="16" font-family="Liberation Sans" font-weight="bold" font-size="8.4" fill="#0b4a8a" stroke="#0b4a8a" stroke-width="0.35" textLength="15" lengthAdjust="spacingAndGlyphs">XML</text></svg>
<div class="row" style="top:740px"></div>
<div class="cb" style="left:280px;top:756px"><svg width="18" height="18" viewBox="0 0 18 18"><path d="M3.4 9.2 L7.2 12.8 L15 4.8" fill="none" stroke="#fff" stroke-width="1.6"/></svg></div>
<div class="cell" style="left:324px;top:755px;letter-spacing:0.3px">INV/000009</div>
<div class="cell" style="left:515px;top:755px">Marketing IT Place</div>
<div class="cell" style="left:706px;top:755px">25-02-2025</div>
<div class="cell" style="left:897px;top:755px">14-05-2025</div>
<div class="cell" style="right:405px;top:755px">3.699,92 €</div>
<div class="cell" style="right:213px;top:755px">4.476,90 €</div>
<svg class="abs" style="left:1502px;top:755px" width="18" height="18" viewBox="0 0 18 18"><path fill="none" stroke="#0b4a8a" stroke-width="1.5" stroke-linecap="round" stroke-linejoin="round" d="M2.15 7.4 L9.1 3.25 L16.05 7.4 V15.25 Q16.05 16.25 15.05 16.25 H3.15 Q2.15 16.25 2.15 15.25 Z M2.3 7.7 L9.1 11.8 L15.9 7.7 M2.6 15.9 L7.3 11 M15.6 15.9 L10.9 11"/></svg>
<svg class="abs" style="left:1535px;top:755px" width="18" height="18" viewBox="0 0 18 18"><rect x="1.7" y="2.7" width="11.6" height="11.35" rx="1.5" fill="none" stroke="#0b4a8a" stroke-width="1.4"/><path d="M1 4 Q1 2 3 2 H12 Q14 2 14 4 V4.9 H1Z" fill="#0b4a8a"/><path d="M3.8 8.95 C4.8 5 10.1 5 11.1 8.95 C10.1 12.9 4.8 12.9 3.8 8.95Z" fill="#0b4a8a"/><circle cx="7.45" cy="8.95" r="1.75" fill="#edf3fb"/><circle cx="7.45" cy="8.95" r="0.95" fill="#0b4a8a"/></svg>
<svg class="abs" style="left:1566px;top:755px" width="18" height="18" viewBox="0 0 18 18"><path fill="none" stroke="#0b4a8a" stroke-width="1.5" stroke-linecap="round" stroke-linejoin="round" d="M11.9 10 V5.6 L8.5 2.15 H3.75 Q1.75 2.15 1.75 4.15 V13.85 Q1.75 15.85 3.75 15.85 H5.6"/><path d="M8.5 2.15 L11.9 5.6 H9.8 Q8.5 5.6 8.5 4.3Z" fill="#0b4a8a" stroke="#0b4a8a" stroke-width="1" stroke-linejoin="round"/><path fill="none" stroke="#0b4a8a" stroke-width="1.5" stroke-linecap="round" stroke-linejoin="round" d="M8.2 13.6 H13.6 M11.4 11.3 L13.7 13.6 L11.4 15.9"/></svg>
<svg class="abs" style="left:1595px;top:755px" width="18" height="18" viewBox="0 0 18 18"><path fill="none" stroke="#0b4a8a" stroke-width="1.5" stroke-linecap="round" stroke-linejoin="round" d="M1.75 8.6 V4.25 Q1.75 2.25 3.75 2.25 H8.6 L12.1 5.75 V8.6"/><path d="M8.6 2.25 L12.1 5.75 H9.9 Q8.6 5.75 8.6 4.45Z" fill="#0b4a8a" stroke="#0b4a8a" stroke-width="1" stroke-linejoin="round"/><text x="1" y="16" font-family="Liberation Sans" font-weight="bold" font-size="8.4" fill="#0b4a8a" stroke="#0b4a8a" stroke-width="0.35" textLength="15" lengthAdjust="spacingAndGlyphs">XML</text></svg>
<div class="abs menu"></div>
<svg class="abs" style="left:1343px;top:273px" width="16" height="16" viewBox="0 0 16 16"><path fill="none" stroke="#3a4354" stroke-width="1.25" stroke-linejoin="round" d="M3.6 6.8 V4.6 Q3.6 3.6 4.6 3.6 H9.6 Q10.6 3.6 10.6 4.6 V6.8 M3.8 12 H2.8 Q1.8 12 1.8 11 V7.8 Q1.8 6.8 2.8 6.8 H11.4 Q12.4 6.8 12.4 7.8 V11 Q12.4 12 11.4 12 H10.4"/><rect x="4.1" y="9.5" width="6" height="4.9" rx="0.8" fill="#fff" stroke="#3a4354" stroke-width="1.25"/></svg>
<div class="mtx" style="top:272px">Drukuj</div>
<svg class="abs" style="left:1343px;top:310px" width="16" height="16" viewBox="0 0 16 16"><text x="1" y="11.7" font-family="Liberation Sans" font-weight="bold" font-size="6.9" fill="#3a4354" stroke="#3a4354" stroke-width="0.35" textLength="12" lengthAdjust="spacingAndGlyphs">CSV</text></svg>
<div class="mtx" style="top:309px">Eksportuj jako CSV</div>
<svg class="abs" style="left:1343px;top:346px" width="16" height="16" viewBox="0 0 16 16"><text x="1" y="12" font-family="Liberation Sans" font-weight="bold" font-size="7.4" fill="#3a4354" stroke="#3a4354" stroke-width="0.35" textLength="12" lengthAdjust="spacingAndGlyphs">PDF</text></svg>
<div class="mtx" style="top:345px">Eksportuj partię PDF</div>
<svg class="abs" style="left:1343px;top:383px" width="16" height="16" viewBox="0 0 16 16"><path fill="none" stroke="#3a4354" stroke-width="1.3" stroke-linejoin="round" d="M2.65 8.8 V4.8 Q2.65 3.65 3.8 3.65 H8.3 L11.25 6.6 V8.8"/><path d="M8.3 3.65 L11.25 6.6 H9.2 Q8.3 6.6 8.3 5.7Z" fill="#3a4354"/><text x="2" y="15" font-family="Liberation Sans" font-weight="bold" font-size="6.9" fill="#3a4354" stroke="#3a4354" stroke-width="0.3" textLength="11" lengthAdjust="spacingAndGlyphs">XML</text></svg>
<div class="mtx" style="top:382px">Eksportuj partię XML</div>
<div class="abs focus"></div>
<div class="abs pill"><span>Pomoc</span></div>
<div class="abs pcirc"><svg width="20" height="16" viewBox="0 0 22 18" style="position:absolute;left:10px;top:13px"><path d="M13.2 6.5 Q12.6 1.2 7.6 1.2 Q1.4 1.2 1.4 6.6 Q1.4 9.6 3.6 11 L3 13.4 L6.2 12 Q6.9 12.1 7.6 12.1" fill="none" stroke="#fff" stroke-width="1.5" stroke-linejoin="round"/><path d="M14 7.6 Q20.4 7.6 20.4 12 Q20.4 14.4 18.6 15.6 L19.2 17.6 L16.2 16.4 Q15.1 16.6 14 16.6 Q8.4 16.6 8.4 12.1 Q8.4 7.6 14 7.6Z" fill="none" stroke="#fff" stroke-width="1.5" stroke-linejoin="round"/><path d="M5.6 5.4 H6.2 M9 5.4 H9.6 M12.3 11.6 H12.9 M15.3 11.6 H15.9" stroke="#fff" stroke-width="1.5" stroke-linecap="round"/></svg></div>
</body></html>
